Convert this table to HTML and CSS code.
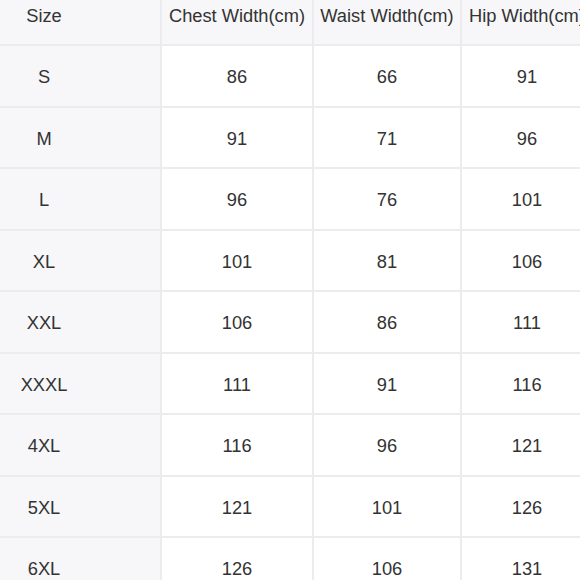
FILE: index.html
```html
<!DOCTYPE html>
<html>
<head>
<meta charset="utf-8">
<link rel="stylesheet" href="styles.css">
</head>
<body>
<div class="chart">
  <div class="cell head first">Size</div>
  <div class="cell head">Chest Width(cm)</div>
  <div class="cell head">Waist Width(cm)</div>
  <div class="cell head last">Hip Width(cm)</div>

  <div class="cell first">S</div><div class="cell">86</div><div class="cell">66</div><div class="cell last">91</div>
  <div class="cell first">M</div><div class="cell">91</div><div class="cell">71</div><div class="cell last">96</div>
  <div class="cell first">L</div><div class="cell">96</div><div class="cell">76</div><div class="cell last">101</div>
  <div class="cell first">XL</div><div class="cell">101</div><div class="cell">81</div><div class="cell last">106</div>
  <div class="cell first">XXL</div><div class="cell">106</div><div class="cell">86</div><div class="cell last">111</div>
  <div class="cell first">XXXL</div><div class="cell">111</div><div class="cell">91</div><div class="cell last">116</div>
  <div class="cell first">4XL</div><div class="cell">116</div><div class="cell">96</div><div class="cell last">121</div>
  <div class="cell first">5XL</div><div class="cell">121</div><div class="cell">101</div><div class="cell last">126</div>
  <div class="cell first">6XL</div><div class="cell">126</div><div class="cell">106</div><div class="cell last">131</div>
</div>
</body>
</html>
```

FILE: styles.css
```css
html, body {
  margin: 0;
  padding: 0;
  background: #ffffff;
  overflow: hidden;
}

.chart {
  display: grid;
  grid-template-columns: 162px 152px 148px 130px;
  grid-auto-rows: 61.5px;
  width: 592px;
  margin-top: -15.5px;
  font-family: "Liberation Sans", Arial, sans-serif;
  font-size: 18.3px;
  color: #333333;
}

.cell {
  box-sizing: border-box;
  display: flex;
  align-items: center;
  justify-content: center;
  white-space: nowrap;
  padding-top: 3px;
  background: #ffffff;
  border-right: 2px solid #ececee;
  border-bottom: 2px solid #ececee;
}

.head {
  background: #f7f7f9;
}

.first {
  background: #f7f7f9;
  padding-right: 72px;
}

.last {
  border-right: none;
}
```
